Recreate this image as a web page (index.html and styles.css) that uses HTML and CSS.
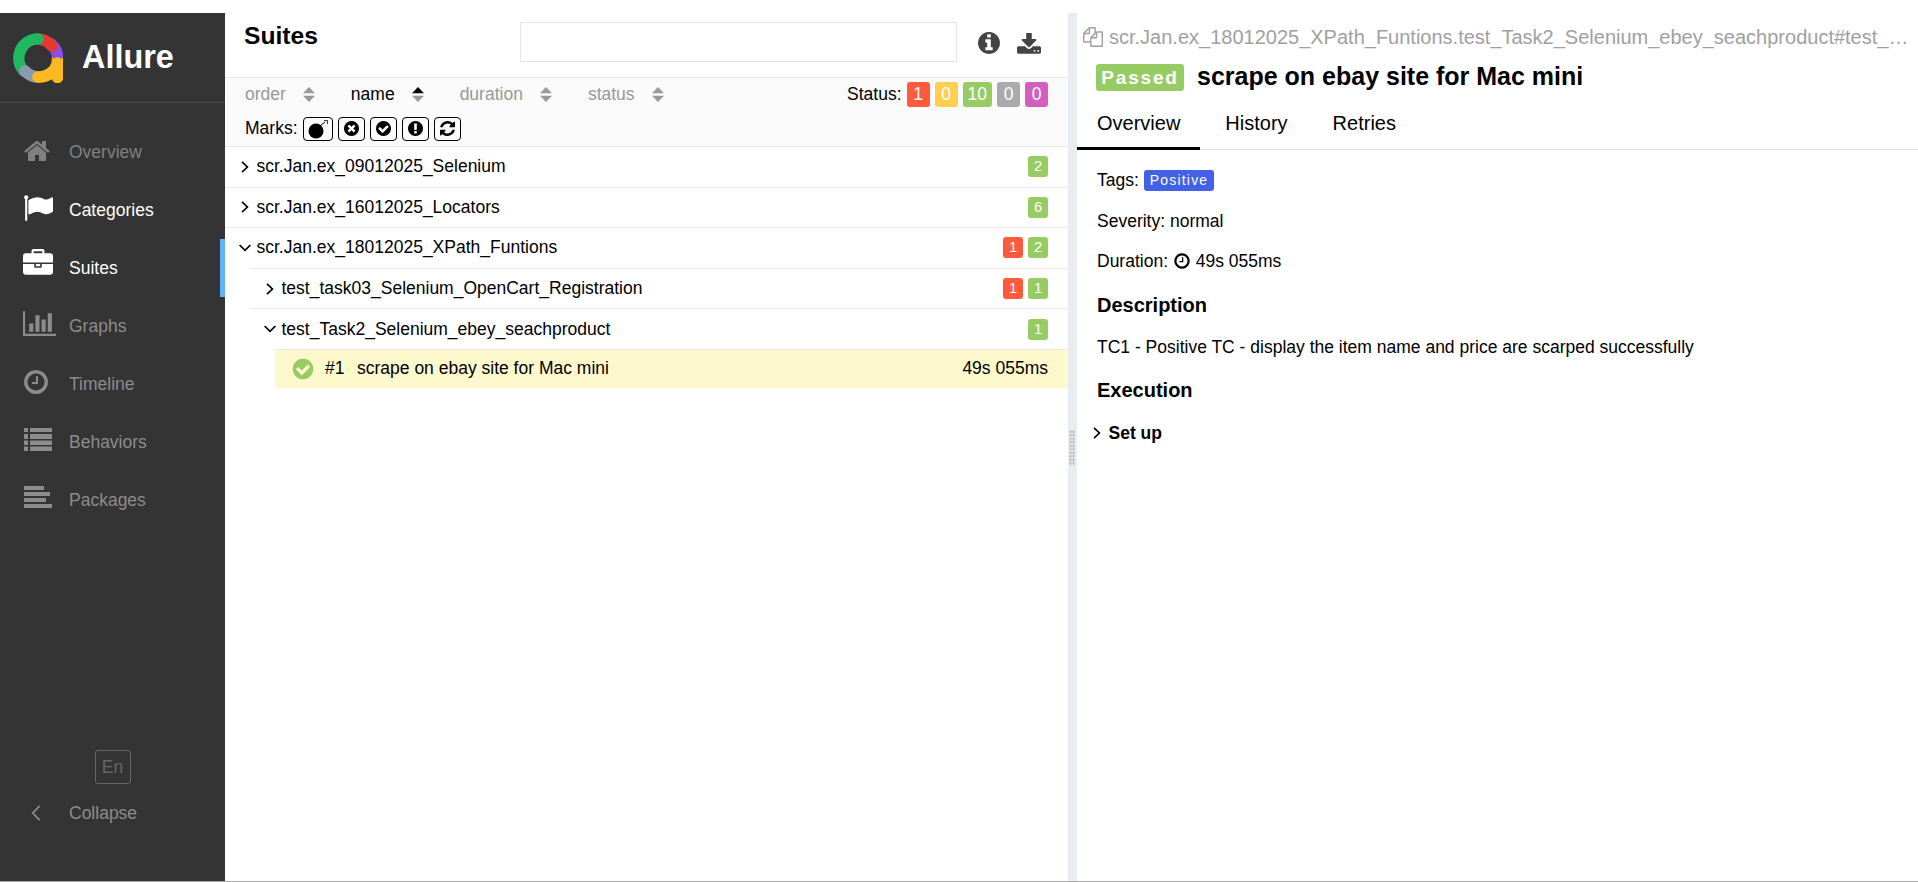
FILE: index.html
```html
<!DOCTYPE html>
<html>
<head>
    <title>Allure Report</title>
    <link rel="stylesheet" href="styles.css">
</head>
<body>
    <!-- icons used more than once -->
    <svg class="defs" xmlns="http://www.w3.org/2000/svg">
        <symbol id="i-clock" viewBox="0 0 1792 1792"><path d="M1024 544v448q0 14-9 23t-23 9h-320q-14 0-23-9t-9-23v-64q0-14 9-23t23-9h224v-352q0-14 9-23t23-9h64q14 0 23 9t9 23zm416 352q0-148-73-273t-198-198-273-73-273 73-198 198-73 273 73 273 198 198 273 73 273-73 198-198 73-273zm224 0q0 209-103 385.5t-279.5 279.5-385.5 103-385.5-103-279.5-279.5-103-385.5 103-385.5 279.5-279.5 385.5-103 385.5 103 279.5 279.5 103 385.5z"/></symbol>
        <symbol id="i-check" viewBox="0 0 1792 1792"><path d="M1412 734q0-28-18-46l-91-90q-19-19-45-19t-45 19l-408 407-226-226q-19-19-45-19t-45 19l-91 90q-18 18-18 46 0 27 18 45l362 362q19 19 45 19 27 0 46-19l543-543q18-18 18-45zm252 162q0 209-103 385.5t-279.5 279.5-385.5 103-385.5-103-279.5-279.5-103-385.5 103-385.5 279.5-279.5 385.5-103 385.5 103 279.5 279.5 103 385.5z"/></symbol>
        <symbol id="i-right" viewBox="0 0 12 12"><path d="M3 .8 8.400 6 3 11.200" fill="none" stroke="currentColor" stroke-width="1.700"/></symbol>
        <symbol id="i-down" viewBox="0 0 12 12"><path d="M.6 3 6 8.400 11.400 3" fill="none" stroke="currentColor" stroke-width="1.700"/></symbol>
        <symbol id="i-sort" viewBox="0 0 12 15"><path d="M6 0 12 6.300H0zM6 15 0 8.700h12z"/></symbol>
    </svg>

    <div class="app">
        <aside class="side">
            <div class="brand">
                <svg class="brand-logo" viewBox="0 0 50 50" xmlns="http://www.w3.org/2000/svg" fill="none" stroke-width="11.500" stroke-linecap="round">
                    <path d="M44.500 25V44.500" stroke="#fdb921"/>
                    <path d="M38 11A19 19 0 0 1 44.500 22" stroke="#8b4fe8"/>
                    <path d="M25 6A19 19 0 0 1 39 13" stroke="#e53935"/>
                    <path d="M25 6A19 19 0 0 0 11 38" stroke="#20b95f"/>
                    <path d="M12 38A19 19 0 0 0 25 44" stroke="#8a9ab0"/>
                    <path d="M25 44A19 19 0 0 0 44.500 30" stroke="#fdb921"/>
                </svg>
                <span class="brand-name">Allure</span>
            </div>
            <nav class="menu">
                <a class="menu-item menu-item-dim">
                    <svg class="menu-icon menu-icon-home" viewBox="0 0 1792 1792"><path d="M1472 992v480q0 26-19 45t-45 19h-384v-384h-256v384h-384q-26 0-45-19t-19-45v-480q0-1 .5-3t.5-3l575-474 575 474q1 2 1 6zm223-69l-62 74q-8 9-21 11h-3q-13 0-21-7l-692-577-692 577q-12 8-24 7-13-2-21-11l-62-74q-8-10-7-23.5t11-21.5l719-599q32-26 76-26t76 26l244 204v-195q0-14 9-23t23-9h192q14 0 23 9t9 23v408l219 182q10 8 11 21.5t-7 23.5z"/></svg>
                    Overview
                </a>
                <a class="menu-item menu-item-white">
                    <svg class="menu-icon" viewBox="0 0 1792 1792"><path d="M320 256q0 72-64 110v1266q0 13-9.5 22.5t-22.5 9.5h-64q-13 0-22.5-9.5t-9.5-22.5v-1266q-64-38-64-110 0-53 37.5-90.5t90.5-37.5 90.5 37.5 37.5 90.5zm1472 64v763q0 25-12.5 38.5t-39.5 27.5q-215 116-369 116-61 0-123.5-22t-108.5-48-115.5-48-142.5-22q-192 0-464 146-17 9-33 9-26 0-45-19t-19-45v-742q0-32 31-55 21-14 79-43 236-120 421-120 107 0 200 29t219 88q38 19 88 19 54 0 117.5-21t110-47 88-47 54.5-21q26 0 45 19t19 45z"/></svg>
                    Categories
                </a>
                <a class="menu-item menu-item-white menu-item-active">
                    <svg class="menu-icon menu-icon-case" viewBox="0 0 1792 1792"><path d="M640 256h512v-128h-512v128zm1152 640v480q0 66-47 113t-113 47h-1472q-66 0-113-47t-47-113v-480h672v160q0 26 19 45t45 19h320q26 0 45-19t19-45v-160h672zm-768 0v128h-256v-128h256zm768-480v384h-1792v-384q0-66 47-113t113-47h352v-160q0-40 28-68t68-28h576q40 0 68 28t28 68v160h352q66 0 113 47t47 113z"/></svg>
                    Suites
                </a>
                <a class="menu-item">
                    <svg class="menu-icon menu-icon-graph" viewBox="0 0 2048 1792"><path d="M640 896v512h-256v-512h256zm384-512v1024h-256v-1024h256zm1024 1152v128h-2048v-1536h128v1408h1920zm-640-896v768h-256v-768h256zm384-384v1152h-256v-1152h256z"/></svg>
                    Graphs
                </a>
                <a class="menu-item">
                    <svg class="menu-icon menu-icon-clock"><use href="#i-clock"/></svg>
                    Timeline
                </a>
                <a class="menu-item">
                    <svg class="menu-icon menu-icon-list" viewBox="0 0 28 28"><path d="M0 3h4v4H0zM6 3h22v4H6zM0 9h4v5H0zM6 9h22v5H6zM0 15.500h4v4.500H0zM6 15.500h22v4.500H6zM0 21.500h4v4.500H0zM6 21.500h22v4.500H6z"/></svg>
                    Behaviors
                </a>
                <a class="menu-item">
                    <svg class="menu-icon menu-icon-list" viewBox="0 0 28 28"><path d="M0 3h20v4H0zM0 9h26v4H0zM0 15h22v4H0zM0 21h28v4H0z"/></svg>
                    Packages
                </a>
            </nav>
            <div class="side-foot">
                <button class="lang">En</button>
                <a class="menu-item menu-item-collapse">
                    <svg class="collapse-icon" viewBox="0 0 12 20"><path d="M10 2 2.500 10 10 18" fill="none" stroke="currentColor" stroke-width="2"/></svg>
                    Collapse
                </a>
            </div>
        </aside>

        <section class="tree-pane">
            <header class="tree-head">
                <h2 class="pane-title">Suites</h2>
                <input class="search" type="text">
                <svg class="head-icon head-info" viewBox="128 128 1536 1536"><path d="M1152 1376v-160q0-14-9-23t-23-9h-96v-512q0-14-9-23t-23-9h-320q-14 0-23 9t-9 23v160q0 14 9 23t23 9h96v320h-96q-14 0-23 9t-9 23v160q0 14 9 23t23 9h448q14 0 23-9t9-23zm-128-896v-160q0-14-9-23t-23-9h-192q-14 0-23 9t-9 23v160q0 14 9 23t23 9h192q14 0 23-9t9-23zm640 416q0 209-103 385.500t-279.500 279.500-385.500 103-385.500-103-279.500-279.500-103-385.500 103-385.500 279.500-279.500 385.500-103 385.500 103 279.500 279.500 103 385.500z"/></svg>
                <svg class="head-icon head-download" viewBox="64 128 1664 1408"><path d="M1344 1344q0-26-19-45t-45-19-45 19-19 45 19 45 45 19 45-19 19-45zm256 0q0-26-19-45t-45-19-45 19-19 45 19 45 45 19 45-19 19-45zm128-224v320q0 40-28 68t-68 28h-1472q-40 0-68-28t-28-68v-320q0-40 28-68t68-28h465l135 136q58 56 136 56t136-56l136-136h464q40 0 68 28t28 68zm-325-569q17 41-14 70l-448 448q-18 19-45 19t-45-19l-448-448q-31-29-14-70 17-39 59-39h256v-448q0-26 19-45t45-19h256q26 0 45 19t19 45v448h256q42 0 59 39z"/></svg>
            </header>

            <div class="toolbar">
                <div class="toolbar-row">
                    <div class="sorters">
                        <span class="sorter">order <svg class="sort-icon"><use href="#i-sort"/></svg></span>
                        <span class="sorter sorter-on">name
                            <svg class="sort-icon" viewBox="0 0 12 15"><path d="M6 0 12 6.300H0z" fill="#000"/><path d="M6 15 0 8.700h12z"/></svg>
                        </span>
                        <span class="sorter">duration <svg class="sort-icon"><use href="#i-sort"/></svg></span>
                        <span class="sorter">status <svg class="sort-icon"><use href="#i-sort"/></svg></span>
                    </div>
                    <div class="status-filter">
                        Status:
                        <span class="count red">1</span>
                        <span class="count yellow">0</span>
                        <span class="count green">10</span>
                        <span class="count gray">0</span>
                        <span class="count pink">0</span>
                    </div>
                </div>
                <div class="marks">
                    Marks:
                    <button class="mark mark-wide">
                        <svg viewBox="0 0 24 20"><circle cx="10" cy="12" r="7.500"/><path d="M14 7 19 3" fill="none" stroke="#000" stroke-width="1"/><path d="M18 1.500h3.500V5" fill="none" stroke="#000" stroke-width=".8"/></svg>
                    </button>
                    <button class="mark"><svg viewBox="128 128 1536 1536"><path d="M1277 1122q0-26-19-45l-181-181 181-181q19-19 19-45 0-27-19-46l-90-90q-19-19-46-19-26 0-45 19l-181 181-181-181q-19-19-45-19-27 0-46 19l-90 90q-19 19-19 46 0 26 19 45l181 181-181 181q-19 19-19 45 0 27 19 46l90 90q19 19 46 19 26 0 45-19l181-181 181 181q19 19 45 19 27 0 46-19l90-90q19-19 19-46zm387-226q0 209-103 385.500t-279.500 279.500-385.500 103-385.500-103-279.500-279.500-103-385.500 103-385.500 279.500-279.500 385.500-103 385.500 103 279.500 279.500 103 385.500z"/></svg></button>
                    <button class="mark"><svg viewBox="128 128 1536 1536"><use href="#i-check" x="0" y="0" width="1792" height="1792"/></svg></button>
                    <button class="mark"><svg viewBox="128 128 1536 1536"><path d="M896 128q209 0 385.500 103t279.500 279.500 103 385.500-103 385.500-279.500 279.500-385.500 103-385.500-103-279.500-279.500-103-385.500 103-385.500 279.500-279.500 385.500-103zm128 1247v-190q0-14-9-23.500t-22-9.500h-192q-13 0-23 10t-10 23v190q0 13 10 23t23 10h192q13 0 22-9.500t9-23.500zm-2-344l18-621q0-12-10-18-10-8-24-8h-220q-14 0-24 8-10 6-10 18l17 621q0 10 10 17.500t24 7.500h185q14 0 23.500-7.500t11.500-17.500z"/></svg></button>
                    <button class="mark"><svg viewBox="128 128 1536 1536"><path d="M1639 1056q0 5-1 7-64 268-268 434.500t-478 166.500q-146 0-282.500-55t-243.500-157l-129 129q-19 19-45 19t-45-19-19-45v-448q0-26 19-45t45-19h448q26 0 45 19t19 45-19 45l-137 137q71 66 161 102t187 36q134 0 250-65t186-179q11-17 53-117 8-23 30-23h192q13 0 22.500 9.500t9.500 22.500zm25-800v448q0 26-19 45t-45 19h-448q-26 0-45-19t-19-45 19-45l138-138q-148-137-349-137-134 0-250 65t-186 179q-11 17-53 117-8 23-30 23h-199q-13 0-22.500-9.500t-9.500-22.500v-7q65-268 270-434.500t480-166.500q146 0 284 55.500t245 156.500l130-129q19-19 45-19t45 19 19 45z"/></svg></button>
                </div>
            </div>

            <div class="tree">
                <div class="row">
                    <svg class="arrow"><use href="#i-right"/></svg>
                    <span class="row-name">scr.Jan.ex_09012025_Selenium</span>
                    <span class="stat green">2</span>
                </div>
                <div class="row">
                    <svg class="arrow"><use href="#i-right"/></svg>
                    <span class="row-name">scr.Jan.ex_16012025_Locators</span>
                    <span class="stat green">6</span>
                </div>
                <div class="row">
                    <svg class="arrow"><use href="#i-down"/></svg>
                    <span class="row-name">scr.Jan.ex_18012025_XPath_Funtions</span>
                    <span class="stat red">1</span>
                    <span class="stat green">2</span>
                </div>
                <div class="tree-group">
                    <div class="row">
                        <svg class="arrow"><use href="#i-right"/></svg>
                        <span class="row-name">test_task03_Selenium_OpenCart_Registration</span>
                        <span class="stat red">1</span>
                        <span class="stat green">1</span>
                    </div>
                    <div class="row">
                        <svg class="arrow"><use href="#i-down"/></svg>
                        <span class="row-name">test_Task2_Selenium_ebey_seachproduct</span>
                        <span class="stat green">1</span>
                    </div>
                    <div class="tree-group">
                        <div class="row row-leaf">
                            <svg class="leaf-status"><use href="#i-check"/></svg>
                            <span class="leaf-num">#1</span>
                            <span class="row-name">scrape on ebay site for Mac mini</span>
                            <span>49s 055ms</span>
                        </div>
                    </div>
                </div>
            </div>
        </section>

        <div class="splitter"><span class="splitter-grip"></span></div>

        <section class="detail">
            <div class="detail-path">
                <svg class="copy-icon" viewBox="0 0 1792 1792"><path d="M1696 384q40 0 68 28t28 68v1216q0 40-28 68t-68 28h-960q-40 0-68-28t-28-68v-288h-544q-40 0-68-28t-28-68v-672q0-40 20-88t48-76l408-408q28-28 76-48t88-20h416q40 0 68 28t28 68v328q68-40 128-40h416zm-544 213l-299 299h299v-299zm-640-384l-299 299h299v-299zm196 647l316-316v-416h-384v416q0 40-28 68t-68 28h-416v640h512v-256q0-40 20-88t48-76zm956 804v-1152h-384v416q0 40-28 68t-68 28h-416v640h896z"/></svg>
                <span class="path-text">scr.Jan.ex_18012025_XPath_Funtions.test_Task2_Selenium_ebey_seachproduct#test_…</span>
            </div>
            <div class="detail-title">
                <span class="passed">Passed</span>
                <h2 class="detail-name">scrape on ebay site for Mac mini</h2>
            </div>
            <div class="tabs">
                <a class="tab tab-on">Overview</a>
                <a class="tab">History</a>
                <a class="tab">Retries</a>
            </div>
            <div class="detail-body">
                <p class="line">Tags: <span class="tag">Positive</span></p>
                <p class="line">Severity: normal</p>
                <p class="line">Duration: <svg class="inline-clock"><use href="#i-clock"/></svg> 49s 055ms</p>
                <h3 class="section">Description</h3>
                <p class="line">TC1 - Positive TC - display the item name and price are scarped successfully</p>
                <h3 class="section section-exec">Execution</h3>
                <div class="step">
                    <svg class="arrow"><use href="#i-right"/></svg>
                    Set up
                </div>
            </div>
        </section>
    </div>
</body>
</html>
```

FILE: styles.css
```css
html, body {
  margin: 0;
  padding: 0;
  height: 100%;
}

body {
  box-sizing: border-box;
  padding-top: 13px;
  background-color: #fff;
  border-bottom: 1px solid #aaa;
  font-family: "Liberation Sans", Arial, sans-serif;
  font-size: 17.5px;
  color: #000;
  overflow: hidden;
}

.defs {
  display: none;
}

.app {
  display: flex;
  height: 100%;
}

/* sidebar */
.side {
  width: 225px;
  flex: none;
  display: flex;
  flex-direction: column;
  background-color: #343434;
  color: #999;
}

.brand {
  height: 90px;
  flex: none;
  box-sizing: border-box;
  display: flex;
  align-items: center;
  padding: 0 0 0 13px;
  border-bottom: 1px solid #4c4c4c;
}

.brand-logo {
  width: 50px;
  height: 50px;
}

.brand-name {
  margin-left: 19px;
  font-size: 32.4px;
  font-weight: bold;
  color: #fff;
}

.menu {
  padding-top: 20px;
  flex: 1;
}

.menu-item {
  display: flex;
  align-items: center;
  height: 58px;
  padding-left: 69px;
  position: relative;
  color: #8c8c8c;
}

.menu-item-dim {
  color: #808080;
}

.menu-item-white {
  color: #fff;
}

.menu-item-active::after {
  content: "";
  position: absolute;
  right: 0;
  top: 0;
  bottom: 0;
  width: 5px;
  background-color: #5eb3f3;
}

.menu-icon {
  position: absolute;
  left: 23px;
  top: 12px;
  width: 30px;
  height: 30px;
  fill: currentColor;
}

.menu-icon-home {
  width: 28px;
  height: 28px;
  top: 14px;
}

.menu-icon-case {
  top: 10px;
}

.menu-icon-graph {
  width: 33px;
  height: 29px;
}

.menu-icon-clock {
  left: 22px;
  top: 13px;
  width: 28px;
  height: 28px;
}

.menu-icon-list {
  left: 24px;
  width: 28px;
  height: 28px;
}

.side-foot {
  padding-bottom: 39px;
  display: flex;
  flex-direction: column;
  align-items: stretch;
}

.lang {
  align-self: center;
  box-sizing: border-box;
  width: 36px;
  height: 34px;
  padding: 0;
  background: none;
  border: 1px solid #666;
  border-radius: 3px;
  font-family: inherit;
  font-size: 17.5px;
  color: #666;
}

.collapse-icon {
  position: absolute;
  left: 30px;
  top: 20px;
  width: 12px;
  height: 18px;
}

/* test tree */
.tree-pane {
  width: 843px;
  flex: none;
}

.tree-head {
  height: 64px;
  box-sizing: border-box;
  display: flex;
  align-items: center;
  padding: 0 27px 0 19px;
}

.pane-title {
  flex: 1;
  margin: 0 0 18px 0;
  font-size: 24.6px;
}

.search {
  width: 437px;
  height: 40px;
  box-sizing: border-box;
  margin: 0 21px 6px 0;
  border: 1px solid #e5e5e5;
  outline: 0;
}

.head-icon {
  fill: #444;
  margin-bottom: 4px;
}

.head-info {
  width: 22px;
  height: 22px;
  margin-right: 17px;
}

.head-download {
  width: 24px;
  height: 21px;
}

.toolbar {
  height: 69px;
  box-sizing: border-box;
  padding: 0 20px;
  background-color: #fafafa;
  border-top: 1px solid #e9e9e9;
}

.toolbar-row {
  display: flex;
  justify-content: space-between;
  align-items: center;
  height: 33px;
}

.sorters {
  display: flex;
  gap: 36px;
}

.sorter {
  display: flex;
  align-items: center;
  gap: 17px;
  color: #999;
}

.sorter-on {
  color: #000;
}

.sort-icon {
  width: 12px;
  height: 15px;
  fill: #999;
}

.status-filter {
  display: flex;
  align-items: center;
  gap: 5px;
}

.count {
  min-width: 23px;
  height: 25px;
  box-sizing: border-box;
  padding: 0 5px;
  line-height: 25px;
  text-align: center;
  border-radius: 3px;
  color: #fff;
}

.red { background-color: #fd5a3e; }
.yellow { background-color: #ffd050; }
.green { background-color: #97cc64; }
.gray { background-color: #aaa; }
.pink { background-color: #d35ebe; }

.marks {
  display: flex;
  align-items: center;
  height: 35px;
  gap: 5px;
}

.mark {
  display: flex;
  align-items: center;
  justify-content: center;
  box-sizing: border-box;
  width: 27px;
  height: 24px;
  padding: 0;
  background: none;
  border: 1px solid #000;
  border-radius: 4px;
}

.mark-wide {
  width: 30px;
}

.mark svg {
  width: 15px;
  height: 15px;
}

.mark-wide svg {
  width: 24px;
  height: 20px;
}

.row {
  display: flex;
  align-items: center;
  height: 40.6px;
  box-sizing: border-box;
  padding: 0 20px 0 14px;
  border-top: 1px solid #ebebeb;
}

.tree-group {
  margin-left: 25px;
}

.arrow {
  width: 12px;
  height: 12px;
  flex: none;
  margin-right: 5.5px;
}

.row-name {
  flex: 1;
}

.stat {
  width: 20px;
  height: 21px;
  margin-left: 5px;
  line-height: 21px;
  text-align: center;
  font-size: 14.67px;
  border-radius: 3px;
  color: #fff;
}

.row-leaf {
  height: 39px;
  padding-left: 16px;
  background-color: #fef8cd;
}

.leaf-status {
  width: 24px;
  height: 24px;
  flex: none;
  margin-right: 10px;
  fill: #97cc64;
}

.leaf-num {
  width: 32px;
}

/* divider between the panes */
.splitter {
  width: 9px;
  flex: none;
  position: relative;
  background-color: #e9edf1;
}

.splitter-grip {
  position: absolute;
  left: 1px;
  top: 417px;
  width: 6px;
  height: 36px;
  background-image: radial-gradient(#c8c8c8 1.2px, transparent 1.4px);
  background-size: 3px 3.5px;
}

/* test result */
.detail {
  flex: 1;
  min-width: 0;
}

.detail-path {
  display: flex;
  align-items: center;
  height: 24px;
  margin: 12px 0 0 6px;
  font-size: 20px;
  white-space: nowrap;
  color: #a0a0a0;
}

.copy-icon {
  width: 20px;
  height: 20px;
  flex: none;
  margin-right: 6px;
  fill: #a0a0a0;
}

.detail-title {
  display: flex;
  align-items: center;
  height: 27px;
  margin: 15px 0 0 19px;
}

.passed {
  width: 88px;
  height: 27px;
  line-height: 27px;
  text-align: center;
  background-color: #97cc64;
  border-radius: 3px;
  color: #fff;
  font-size: 19px;
  font-weight: bold;
  letter-spacing: 1.8px;
}

.detail-name {
  margin: -3px 0 0 13px;
  font-size: 25px;
}

.tabs {
  display: flex;
  height: 59px;
  box-sizing: border-box;
  padding-top: 19px;
  border-bottom: 1px solid #e5e5e5;
}

.tab {
  height: 37px;
  padding: 0 20px;
  margin-right: 5px;
  margin-bottom: -1px;
  font-size: 20px;
  line-height: 26px;
}

.tab-on {
  border-bottom: 3px solid #000;
}

.detail-body {
  padding: 18px 0 0 20px;
}

.line {
  margin: 0 0 16.5px 0;
  height: 24px;
  line-height: 24px;
}

.tag {
  display: inline-block;
  height: 21px;
  padding: 0 6px;
  line-height: 21px;
  background-color: #4361e6;
  border-radius: 3px;
  color: #fff;
  font-size: 14px;
  letter-spacing: 1.2px;
  vertical-align: 1px;
}

.inline-clock {
  width: 18px;
  height: 18px;
  vertical-align: -3px;
}

.section {
  margin: 20px 0 18px 0;
  height: 24px;
  line-height: 24px;
  font-size: 20px;
}

.section-exec {
  margin: 19px 0 19px 0;
}

.step {
  display: flex;
  align-items: center;
  margin-left: -6px;
  height: 24px;
  font-weight: bold;
}
```
